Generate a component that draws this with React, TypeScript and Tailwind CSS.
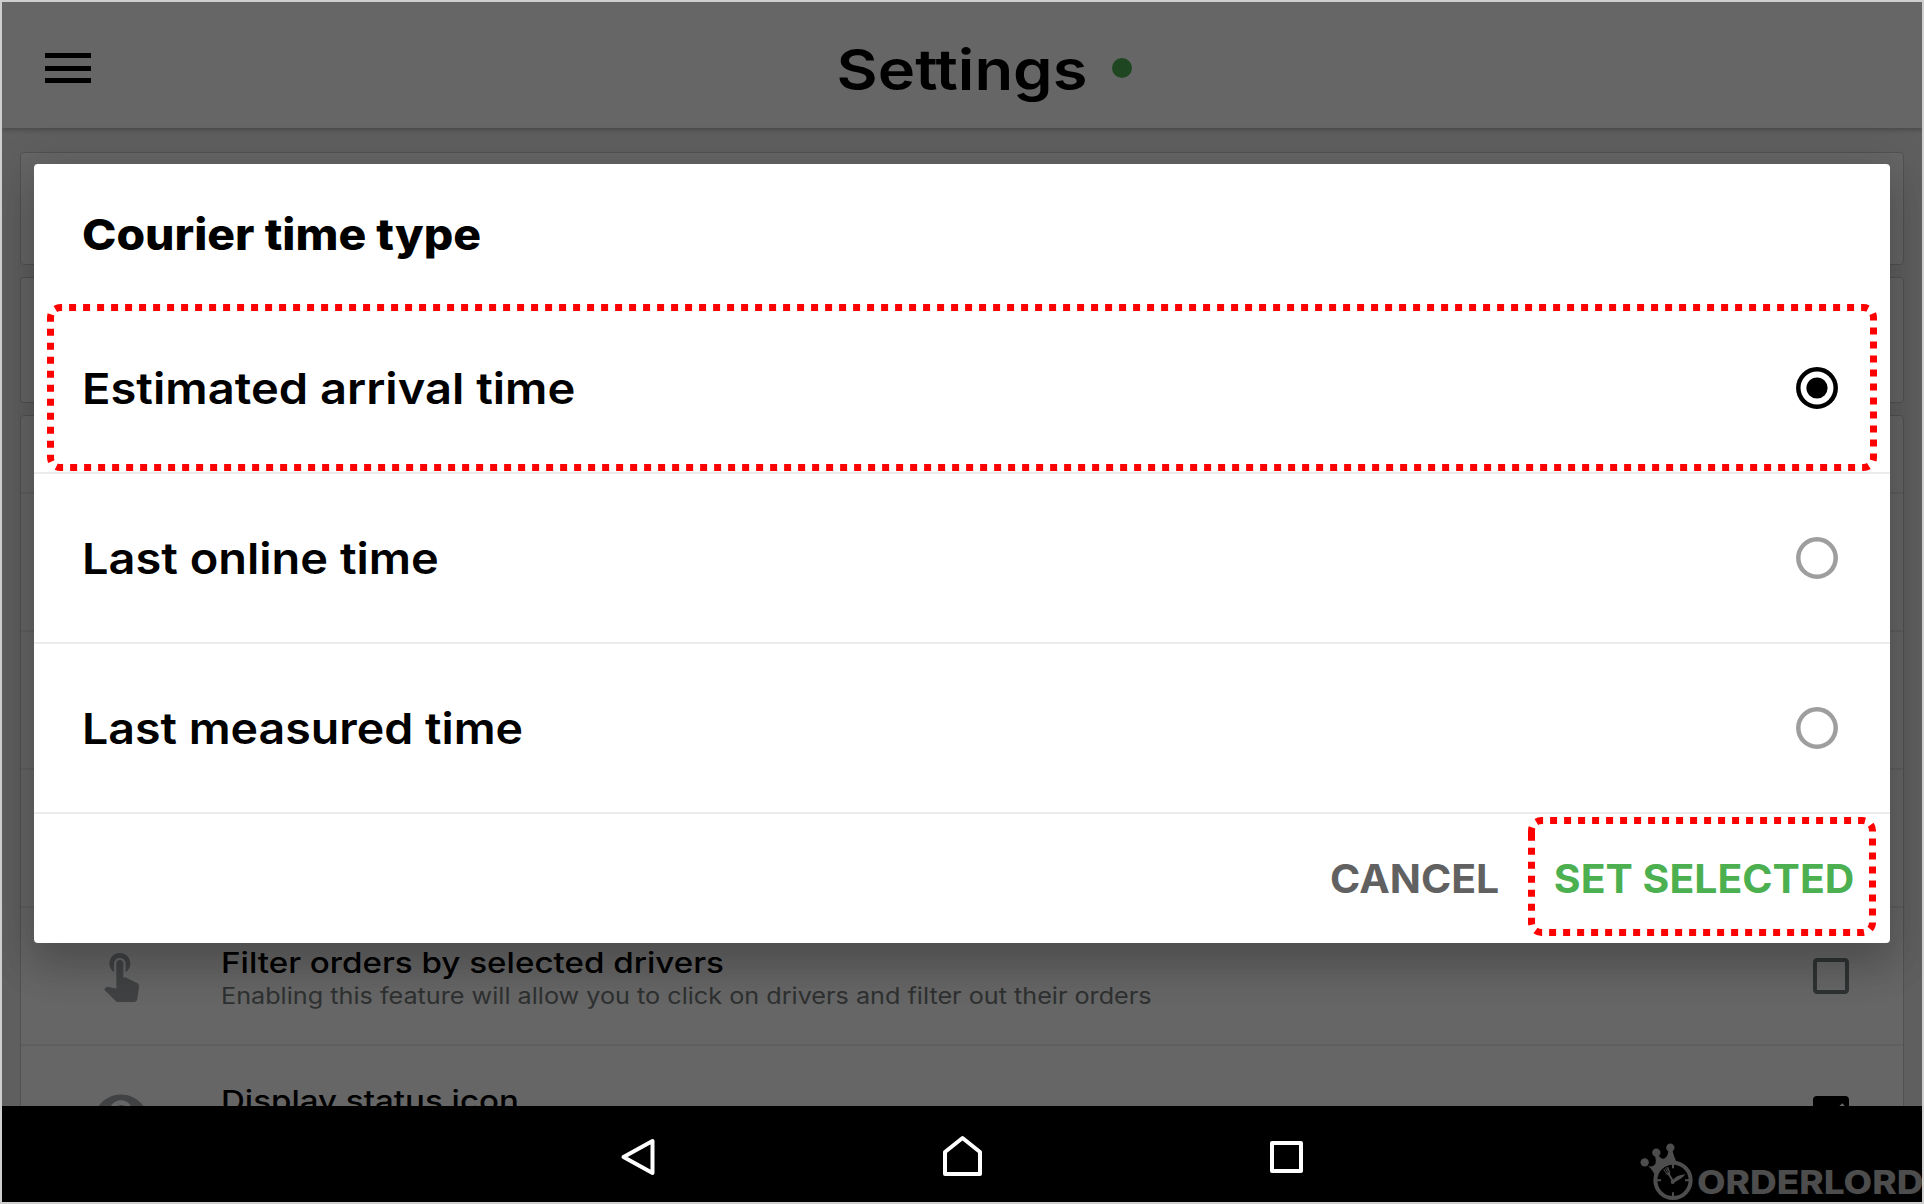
import type { ReactNode } from 'react';
import { MdCheckBox, MdCheckBoxOutlineBlank, MdTouchApp, MdVisibility } from 'react-icons/md';

/* Red dotted frame that highlights a control */
function Highlight({ w, h, className }: { w: number; h: number; className: string }) {
  const r = 10;
  const l = 3.5;
  const t = 3.5;
  const rt = w - 3.5;
  const b = h - 3.5;
  const d = `M${l} ${t + r + 3.8}V${t + r}A${r} ${r} 0 0 1 ${l + r} ${t}H${rt - r}A${r} ${r} 0 0 1 ${rt} ${t + r}V${b - r}A${r} ${r} 0 0 1 ${rt - r} ${b}H${l + r}A${r} ${r} 0 0 1 ${l} ${b - r}V${t + r + 3.8}`;
  return (
    <svg width={w} height={h} viewBox={`0 0 ${w} ${h}`} className={`pointer-events-none absolute ${className}`}>
      <path d={d} fill="none" stroke="#ff0000" strokeWidth="7" strokeDasharray="7 7" />
    </svg>
  );
}

function Radio({ checked }: { checked?: boolean }) {
  return (
    <svg width="42" height="42" viewBox="0 0 42 42" className={checked ? 'text-black' : 'text-[#9e9e9e]'}>
      <circle cx="21" cy="21" r="18.7" fill="none" stroke="currentColor" strokeWidth="4.5" />
      {checked && <circle cx="21" cy="21" r="10.6" fill="currentColor" />}
    </svg>
  );
}

function Option({ label, stretch, checked, children }: { label: string; stretch: string; checked?: boolean; children?: ReactNode }) {
  return (
    <div className="relative flex h-[170px] items-center justify-between border-b-2 border-[#ececec] pr-[52px] pl-[48px]">
      <span className={`origin-left text-[43px] leading-none font-semibold whitespace-nowrap text-black ${stretch}`}>{label}</span>
      <Radio checked={checked} />
      {children}
    </div>
  );
}

function SettingRow({ icon, title, stretch, subtitle, box }: { icon: ReactNode; title: string; stretch: string; subtitle?: string; box: ReactNode }) {
  return (
    <div className="flex h-[138px] shrink-0 border-b-2 border-[#eeeeee] pr-[48px] pl-[72px]">
      <div className="mt-[38px] w-[128px] text-[56px] text-[#a0a5a8]">{icon}</div>
      <div className="mt-[36px] flex-1">
        <div className={`w-fit origin-left text-[29px] leading-[37px] font-medium whitespace-nowrap text-black ${stretch}`}>{title}</div>
        {subtitle && (
          <div className="-mt-px w-fit origin-left scale-x-[1.12] text-[22.5px] leading-[32px] whitespace-nowrap text-[#757c7c]">{subtitle}</div>
        )}
      </div>
      <div className="mt-[44px] text-[48px]">{box}</div>
    </div>
  );
}

function OrderlordMark() {
  return (
    <svg width="53" height="58" viewBox="46 25 159 174" fill="#4d4d4d">
      <circle cx="60" cy="83" r="12.5" />
      <circle cx="95" cy="54" r="12.5" />
      <circle cx="137" cy="39" r="12.5" />
      <path d="M56 86 Q80 104 92 88 Q96 78 89 58 L101 56 Q104 74 118 72 Q132 66 131 42 L142 42 Q146 62 158 88 L92 124 Q78 94 56 86Z" />
      <circle cx="145" cy="137" r="53" fill="#000" stroke="#4d4d4d" strokeWidth="12" />
      <path d="M145 89v12M145 173v12M97 137h12M181 137h12" stroke="#4d4d4d" strokeWidth="6" />
      <path d="M145 140L129 113" stroke="#4d4d4d" strokeWidth="6" />
      <path d="M117 103l10 17 9-5-7-18M122 101l7 12M126 98l6 12" stroke="#4d4d4d" strokeWidth="3" fill="none" />
      <path d="M141 143Q150 121 183 119Q172 132 150 143Z" />
      <circle cx="144" cy="142" r="6" />
    </svg>
  );
}

export default function App() {
  return (
    <div className="flex h-[1204px] w-[1924px] flex-col overflow-hidden border-2 border-[#cfcfcf] bg-black font-['Inter',sans-serif]">
      <div className="relative flex h-[1104px] flex-col overflow-hidden bg-[#eeeeee]">
        <header className="relative flex h-[126px] shrink-0 items-center justify-center bg-white pt-[9px] shadow-[0_2px_5px_rgba(0,0,0,0.25)]">
          <div className="absolute top-[51px] left-[43px] flex h-[30px] w-[46px] flex-col justify-between">
            <span className="h-[5px] bg-black" />
            <span className="h-[5px] bg-black" />
            <span className="h-[5px] bg-black" />
          </div>
          <h1 className="ml-[59px] scale-x-[1.13] text-[56px] leading-none font-semibold text-black">Settings</h1>
          <span className="-mt-[3px] ml-[38px] size-[20px] rounded-full bg-[#4caf50]" />
        </header>

        <main className="flex flex-1 flex-col gap-3 overflow-hidden px-[18px] pt-[24px]">
          <section className="h-[113px] shrink-0 rounded-[4px] border border-[#cccccc] bg-white" />
          <section className="h-[126px] shrink-0 rounded-[4px] border border-[#cccccc] bg-white" />
          <section className="flex h-[900px] shrink-0 flex-col rounded-[4px] border border-[#cccccc] bg-white">
            <div className="h-[78px] shrink-0 border-b-2 border-[#eeeeee]" />
            <div className="h-[138px] shrink-0 border-b-2 border-[#eeeeee]" />
            <div className="h-[138px] shrink-0 border-b-2 border-[#eeeeee]" />
            <div className="h-[138px] shrink-0 border-b-2 border-[#eeeeee]" />
            <SettingRow
              icon={<MdTouchApp />}
              title="Filter orders by selected drivers"
              stretch="scale-x-[1.143]"
              subtitle="Enabling this feature will allow you to click on drivers and filter out their orders"
              box={<MdCheckBoxOutlineBlank className="text-[#757f7f]" />}
            />
            <SettingRow
              icon={<MdVisibility />}
              title="Display status icon"
              stretch="scale-x-[1.14]"
              box={<MdCheckBox className="text-black" />}
            />
          </section>
        </main>

        <div className="absolute inset-0 bg-black/60 px-[32px] pt-[162px]">
          <div
            role="dialog"
            className="h-[779px] rounded-[4px] bg-white shadow-[0_24px_38px_3px_rgba(0,0,0,0.14),0_9px_46px_8px_rgba(0,0,0,0.12)]"
          >
            <div className="flex h-[140px] items-center pl-[48px]">
              <h2 className="origin-left scale-x-[1.077] text-[43px] leading-none font-extrabold whitespace-nowrap text-black">Courier time type</h2>
            </div>
            <Option label="Estimated arrival time" stretch="scale-x-[1.095]" checked>
              <Highlight w={1830} h={167} className="top-0 left-[13px]" />
            </Option>
            <Option label="Last online time" stretch="scale-x-[1.092]" />
            <Option label="Last measured time" stretch="scale-x-[1.082]" />
            <div className="relative flex h-[129px] items-center justify-end gap-[66px] pr-[43px] text-[39px] leading-none font-bold whitespace-nowrap">
              <button className="scale-x-[1.05] text-[#616161]">CANCEL</button>
              <button className="scale-x-[1.05] text-[#4caf50]">SET SELECTED</button>
              <Highlight w={348} h={119} className="top-[3px] left-[1494px]" />
            </div>
          </div>
        </div>
      </div>

      <nav className="relative flex h-[96px] items-center justify-center gap-[284px] bg-black">
        <svg width="40" height="44" viewBox="0 0 40 44" fill="none" stroke="#fff" strokeWidth="4" strokeLinejoin="round">
          <path d="M34.500 9V41L5.500 25Z" />
        </svg>
        <svg width="40" height="44" viewBox="0 0 40 44" fill="none" stroke="#fff" strokeWidth="4" strokeLinejoin="round">
          <path d="M3 42V20L20.500 6L38 20V42Z" />
        </svg>
        <svg width="40" height="44" viewBox="0 0 40 44" fill="none" stroke="#fff" strokeWidth="4" strokeLinejoin="round">
          <rect x="6" y="11" width="29" height="28" />
        </svg>
        <div className="absolute right-0 bottom-px flex items-end">
          <OrderlordMark />
          <span className="mb-[2px] ml-[4px] w-[225px]">
            <span className="block w-fit origin-left scale-x-[1.155] text-[32px] leading-[32px] font-extrabold text-[#4d4d4d]">ORDERLORD</span>
          </span>
        </div>
      </nav>
    </div>
  );
}
